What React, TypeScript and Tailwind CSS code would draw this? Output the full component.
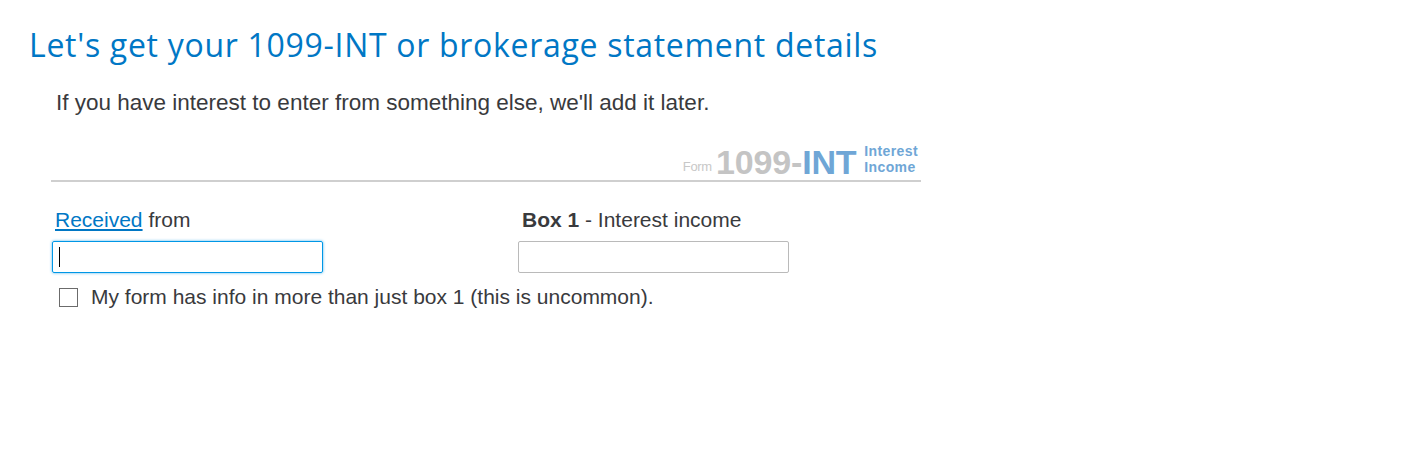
export default function App() {
  return (
    <div className="min-h-[467px] bg-white pl-[29px] pt-[26px]" style={{ fontFamily: '"Liberation Sans", Arial, sans-serif' }}>
      <h1 className="text-[32px] leading-[38px] font-medium tracking-[0.7px] text-[#0077c5] font-['Open_Sans',sans-serif]">
        Let's get your 1099-INT or brokerage statement details
      </h1>
      <div className="pl-[22px] w-[892px]">
        <p className="mt-[27px] ml-[5px] text-[22.5px] leading-[24px] text-[#393a3d]">
          If you have interest to enter from something else, we'll add it later.
        </p>
        <div className="mt-[28px] flex items-end justify-end border-b-2 border-[#cfcfcf] pb-[3px] pr-[3px]">
          <span className="text-[13px] leading-none text-[#c8c8c8] mr-[4px] mb-[4px] tracking-[-0.3px]">Form</span>
          <span className="text-[34px] leading-[30px] font-bold text-[#c4c4c4] tracking-[-0.1px]">1099-</span>
          <span className="text-[34px] leading-[30px] font-bold text-[#6fa6d6] tracking-[-0.3px]">INT</span>
          <span className="ml-[8px] mb-[2px] flex flex-col text-[14px] leading-[16px] font-bold text-[#6fa6d6] tracking-[0.4px]">
            <span>Interest</span>
            <span>Income</span>
          </span>
        </div>
        <div className="mt-[26px] flex gap-[195px]">
          <div className="flex flex-col">
            <label className="ml-[4px] text-[21px] leading-[24px] text-[#393a3d]">
              <a href="#" className="text-[#0077c5] underline">Received</a> from
            </label>
            <div className="relative mt-[9px] ml-[1px]">
              <input
                className="h-[32px] w-[271px] rounded-[2px] border border-[#0097e6] px-2 text-[16px] outline-none shadow-[0_0_3px_#4fb3ea] caret-transparent"
              />
              <span className="absolute left-[7px] top-[6px] h-[20px] w-px bg-black" />
            </div>
          </div>
          <div className="flex flex-col">
            <label className="ml-[4px] text-[21px] leading-[24px] text-[#393a3d]">
              <b>Box 1</b> - Interest income
            </label>
            <input className="mt-[9px] h-[32px] w-[271px] rounded-[2px] border border-[#bababa] px-2 text-[16px] outline-none" />
          </div>
        </div>
        <label className="mt-[12px] ml-[8px] flex items-center gap-[13px] text-[21px] leading-[24px] text-[#393a3d]">
          <span className="block h-[19px] w-[19px] border border-[#6b6b6b] bg-white" />
          My form has info in more than just box 1 (this is uncommon).
        </label>
      </div>
    </div>
  );
}
